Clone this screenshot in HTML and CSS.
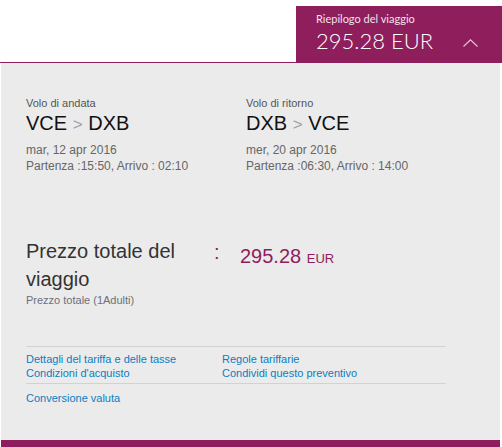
FILE: index.html
```html
<!DOCTYPE html>
<html lang="it">
<head>
  <meta charset="UTF-8">
  <title>Riepilogo del viaggio</title>
  <link rel="stylesheet" href="styles.css">
</head>
<body>
  <!-- Summary header -->
  <div class="topbar">
    <div class="summary-tab">
      <div class="summary-text">
        <div class="summary-label">Riepilogo del viaggio</div>
        <div class="summary-price">295.28 EUR</div>
      </div>
      <svg class="chevron" width="15" height="8" viewBox="0 0 15 8">
        <path d="M0.5 7.5 L7.5 0.8 L14.5 7.5" fill="none" stroke="#e8c8da" stroke-width="1.1"/>
      </svg>
    </div>
  </div>

  <div class="panel">
    <!-- Flights -->
    <div class="flights">
      <div class="flight">
        <div class="flight-label">Volo di andata</div>
        <div class="route">VCE <span class="arrow">&gt;</span> DXB</div>
        <div class="flight-info">mar, 12 apr 2016</div>
        <div class="flight-info">Partenza :15:50, Arrivo : 02:10</div>
      </div>
      <div class="flight">
        <div class="flight-label">Volo di ritorno</div>
        <div class="route">DXB <span class="arrow">&gt;</span> VCE</div>
        <div class="flight-info">mer, 20 apr 2016</div>
        <div class="flight-info">Partenza :06:30, Arrivo : 14:00</div>
      </div>
    </div>

    <!-- Total -->
    <div class="total">
      <div class="total-label">
        <div class="total-title">Prezzo totale del viaggio</div>
        <div class="total-sub">Prezzo totale (1Adulti)</div>
      </div>
      <div class="total-colon">:</div>
      <div class="total-price">295.28 <span class="currency">EUR</span></div>
    </div>

    <!-- Links -->
    <div class="links">
      <div class="link-grid">
        <a href="#">Dettagli del tariffa e delle tasse</a>
        <a href="#">Regole tariffarie</a>
        <a href="#">Condizioni d'acquisto</a>
        <a href="#">Condividi questo preventivo</a>
      </div>
      <div class="link-extra">
        <a href="#">Conversione valuta</a>
      </div>
    </div>
  </div>
  <div class="bottom-bar"></div>
</body>
</html>
```

FILE: styles.css
```css
/* General Styles */
body {
  margin: 0;
  background: #fff;
  font-family: "Liberation Sans", Arial, sans-serif;
  color: #222;
}

/* Header */
.topbar {
  display: flex;
  justify-content: flex-end;
  padding-top: 6px;
  border-bottom: 1px solid #8e1e5c;
}

.summary-tab {
  width: 206px;
  height: 56px;
  background: #8e1e5c;
  color: #fff;
  display: flex;
  align-items: flex-start;
  box-sizing: border-box;
  padding: 6px 0 0 20px;
}

.summary-text {
  font-family: Lato, "Open Sans", sans-serif;
}

.summary-label {
  font-size: 11px;
  line-height: 14px;
  color: #f3e1eb;
}

.summary-price {
  font-size: 22px;
  line-height: 28px;
  font-weight: 300;
  margin-top: 1px;
}

.chevron {
  display: block;
  margin: 27px 0 0 30px;
}

/* Panel */
.panel {
  background: #ebebeb;
  margin: 0 2px 0 1px;
  padding: 33px 0 0 25px;
  height: 377px;
  box-sizing: border-box;
}

.flights {
  display: flex;
}

.flight {
  width: 220px;
}

.flight-label {
  font-size: 11px;
  line-height: 14px;
  color: #555;
}

.route {
  font-size: 20px;
  line-height: 24px;
  height: 24px;
  margin-top: 1px;
  color: #111;
}

.arrow {
  color: #a0a0a0;
  font-size: 17px;
  line-height: 1;
}

.flight-info {
  font-size: 12px;
  line-height: 16px;
  color: #666;
}

.route + .flight-info {
  margin-top: 7px;
}

/* Total */
.total {
  display: flex;
  margin-top: 63px;
}

.total-label {
  width: 185px;
}

.total-title {
  font-size: 20px;
  line-height: 28px;
  color: #333;
}

.total-sub {
  font-size: 11px;
  line-height: 14px;
  color: #6b7079;
}

.total-colon {
  width: 29px;
  font-size: 20px;
  line-height: 28px;
  padding-left: 3px;
  box-sizing: border-box;
  color: #8e1e5c;
  margin-top: 1px;
}

.total-price {
  font-size: 20px;
  line-height: 28px;
  height: 28px;
  color: #8e1e5c;
  margin-top: 5px;
}

.currency {
  font-size: 13px;
  line-height: 1;
}

/* Links */
.links {
  width: 420px;
  margin-top: 39px;
  border-top: 1px solid #d2d2d2;
}

.link-grid {
  display: grid;
  grid-template-columns: 196px 1fr;
  padding: 5px 0 3px;
  border-bottom: 1px solid #d2d2d2;
}

.links a {
  font-size: 11px;
  line-height: 14px;
  color: #0b7dc2;
  text-decoration: none;
}

.link-extra {
  padding-top: 4px;
}

.bottom-bar {
  height: 7px;
  margin: 0 2px 0 1px;
  background: #8e1e5c;
}
```
